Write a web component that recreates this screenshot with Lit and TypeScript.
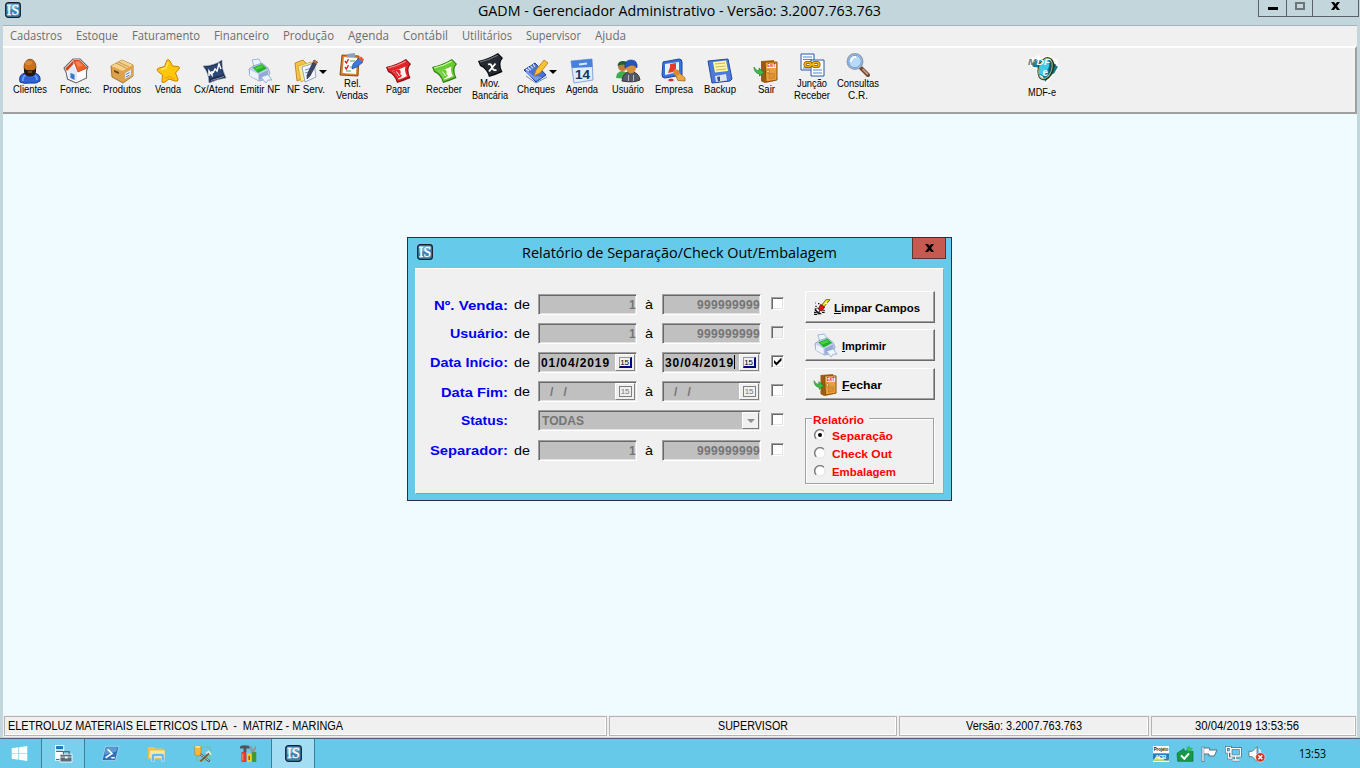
import { LitElement, html, css, svg, nothing } from "lit";
import { customElement, property } from "lit/decorators.js";

// Glyph art, each drawn in a 24 x 24 box.
const door = svg`
  <path d="M7 2 20 1V22L11 24 7 22Z" fill="#b46c1c"/><path d="M7 2 11 3V24L7 22Z" fill="#9a5c14"/>
  <path d="M11 3H23V21L12 23Z" fill="#e9a03c" stroke="#7c4508" stroke-width=".9"/>
  <path d="M15 14.500H20.500V19L15 20Z" fill="#dc9230" stroke="#b8742a" stroke-width=".5"/>
  <rect x="13" y="4" width="9" height="5" fill="#fff"/><text x="13.300" y="8.400" font-family="Liberation Sans, sans-serif" font-size="5" font-weight="bold" textLength="8.400" lengthAdjust="spacingAndGlyphs" fill="#e00020">EXIT</text>
  <circle cx="14" cy="12.500" r="1.500" fill="#fbe08c" stroke="#875f26" stroke-width=".7"/>
  <path d="M0 8Q2 12 5 12V9L10 13.500 5.500 17V15Q0 14 0 8Z" fill="#3cbf44" stroke="#14741f" stroke-width=".6"/>`;
const printer = svg`
  <path d="M4 1 11 0 15 8 7 10Z" fill="#eaf6ff" stroke="#88a9cf" stroke-width=".8"/>
  <path d="M1 10 5 7 14 4 20 9 22 14 19 20 11 22 2 17Z" fill="#c3d1ee" stroke="#7d91ba" stroke-width=".7"/>
  <path d="M2 11 10 15V21L2 17Z" fill="#edf2fc"/><path d="M11 15 20 11V18L11 21Z" fill="#98a8d6"/>
  <path d="M4.500 8.500 14 5 19 9.500 10 14Z" fill="#1fb42c"/><path d="M6.500 8.800 14 6.300 15.500 8 8.500 11Z" fill="#4fd040"/>
  <path d="M13 18 20 15.500 24 21 20 21 18 24Z" fill="#edf6ff" stroke="#85a5ca" stroke-width=".8"/>`;
const bill = (a: string, b: string, c: string) => svg`
  <path d="M0 8Q10 6 20 0L25 5Q20 10 24.500 19Q18 22 11 24Q9 16 2 13Z" fill="${c}"/>
  <path d="M1.300 8.800Q11 6.500 19.800 1.300L23.500 5Q19 10 23 18Q17 20.500 11.500 22.500Q9.500 15 3 12Z" fill="${a}"/>
  <path d="M2 9Q11 7 19.800 2.200" stroke="${b}" stroke-width="1.100" fill="none"/>`;
const billMark = (a: string) => svg`<path d="M6 12Q13 11 19.500 7.500Q18 12 21 17Q17 19 12.500 20.500Q11 15 6 12Z" fill="#fff5ee"/>
  <path d="M6 12Q10 11 13 10.300Q16 13 14 15L16 16.500Q15 18.500 12.300 19.600Q11 15 6 12Z" fill="${a}"/>
  <path d="M10 12.500Q12 13.500 13.500 17" stroke="#fff5ee" stroke-width="1" fill="none"/>`;
const isMark = svg`
  <rect x="1" y="1" width="22" height="22" rx="4" fill="#3f84b4" stroke="#14212c" stroke-width="1.800"/>
  <path d="M3 3H21V8Q12 9 3 13Z" fill="#74add2"/>
  <text x="2.800" y="19" font-family="Liberation Serif, serif" font-size="21" textLength="18.400" lengthAdjust="spacingAndGlyphs" fill="#fff" stroke="#fff" stroke-width=".4">IS</text>`;

const icons: Record<string, unknown> = {
  is: isMark,
  door,
  printer,
  client: svg`<path d="M2 23Q0 15 8 14H16Q23 15 22 22Q19 25 12 24 5 25 2 23Z" fill="#2c63d6" stroke="#133a93"/>
    <path d="M5 22Q4 18 8 16M19 21Q19 18 17 16.500" stroke="#6a9df2" stroke-width="1.800" fill="none"/>
    <ellipse cx="12" cy="8" rx="6" ry="7.800" fill="#c9711d" stroke="#6f3708" stroke-width=".7"/>
    <path d="M6 9Q8 12 12 11 16 12 18 9 19 17.500 12 17.500 5 17.500 6 9Z" fill="#24180f"/><path d="M10 13H14" stroke="#c26a1b"/>
    <ellipse cx="10.500" cy="4" rx="3.500" ry="2.300" fill="#d98636"/>`,
  house: svg`<path d="M2 13 0 9 9 0H16L24 8 22.500 12V19L12 24 3.500 20Z" fill="#fff" stroke="#666" stroke-width="1.100"/>
    <path d="M4 11 9 5.500 13.500 13V22.500L4.500 18.500Z" fill="#dfe9fa"/><path d="M13.500 13 21 10.500V18L13.500 22.500Z" fill="#fff"/>
    <path d="M9.500 1.500 15.500 1.500 23 9 14 13Z" fill="#f26222" stroke="#b63107" stroke-width=".7"/><path d="M9.500 1.500 1.300 9.500 3 12 9.500 5Z" fill="#d64010"/>
    <path d="M11.500 3 15 2.500 19 6.500 13.500 8Z" fill="#fa8450"/><path d="M6.500 14 10.500 15.500V21L6.500 19Z" fill="#3b74c6"/>`,
  box: svg`<path d="M1 7 12 1 23 6V17L13 24 2 18Z" fill="#dda24c" stroke="#916020" stroke-width=".8"/>
    <path d="M1 7 12 1 23 6 13 12Z" fill="#f6d28c"/><path d="M13 12 23 6V17L13 23Z" fill="#e1a34a"/><path d="M6 4 17 9.500M8.500 3 19 8" stroke="#c5954d" stroke-width="1"/>
    <path d="M4 11 9 13V15L4 13Z" fill="#6d461c"/><path d="M15 14 21 10.500V16.500L15 20Z" fill="#e8f1ff" stroke="#aaa" stroke-width=".4"/><path d="M16 15.500 19.500 13.500M16 18 19.500 16" stroke="#4d7ed0"/>`,
  star: svg`<path d="M11 1Q13 0 14 2L16.500 7 22 7.500Q24.500 8 23 10L19.500 14 22 20Q22.500 23 19 22L13 20 8 23.500Q5 24 6 21L6.500 16 1.500 12Q0 10 3 9L8.500 7.500Z" fill="#ffc70a" stroke="#ce7e09"/>
    <path d="M12 3.500 10 9 5 10.500" stroke="#ffe85c" stroke-width="1.600" fill="none"/><path d="M8.500 19.500 13 17.500 18.500 20" stroke="#f8ab10" stroke-width="1.600" fill="none"/>`,
  cash: svg`<path d="M1 7Q12 7 20 1Q19 9 24 19Q15 20 7 24Q7 14 1 7Z" fill="#1b2a47" stroke="#8a97ad" stroke-width=".6"/><path d="M3 8Q12 8 19 3Q18 9 21.500 16Q14 17 8 20Q7 13 3 8Z" fill="#2b4677"/><path d="M7 17V12L10 16V12M11 14 13 10 15 12 17 5 19 10" stroke="#fff" stroke-width="1.500" fill="none"/><path d="M9 21.500 22 17.500" stroke="#7c91b5"/>`,
  notes: svg`<path d="M1 4 9 1 12 4 13 18 3 22Z" fill="#f5c53d" stroke="#ae7a19" stroke-width=".8"/><path d="M4 7 17 3 20 16 7 23Z" fill="#ffe898" stroke="#d09a27" stroke-width=".7"/>
    <path d="M8 8 20 4 22 18 11 23Z" fill="#f3f8ff" stroke="#7894bb" stroke-width=".8"/><path d="M11 11 18 9M11 14 18 12M12 17 17 15.500" stroke="#6b94d9"/>
    <path d="M20 1 23.500 3 16 17 13 20 13.500 15Z" fill="#3d4662" stroke="#151b2e" stroke-width=".6"/><path d="M20 1 23.500 3 22.500 5 19 3Z" fill="#bd6e3d"/>`,
  report: svg`<path d="M2 2 19 3 18 23 0 22Z" fill="#d8842c" stroke="#8c4c12"/><path d="M4 4 17 5 16 21 2.500 20Z" fill="#fff"/>
    <path d="M7 1 15 0V4L7 4.500Z" fill="#8fa0b8"/><path d="M5 8 6.500 10 8.500 6M5 14 6.500 16 8.500 12" stroke="#d81e28" stroke-width="1.300" fill="none"/><path d="M10 8H15M10 14H14M6 18H11" stroke="#47a447"/>
    <path d="M19 5 23 9 17 14 12 16 13 11Z" fill="#397bdf" stroke="#174891" stroke-width=".7"/><path d="M18.500 5.500 21 3.500 24 6.500 22.500 9Z" fill="#e5573a"/>`,
  pay: svg`${bill("#e2252b", "#ff8a82", "#8d1115")}${billMark("#e2252b")}`,
  receive: svg`${bill("#68cb34", "#c6ff95", "#2f8213")}${billMark("#68cb34")}`,
  bank: svg`${bill("#252a31", "#6d747d", "#080a0e")}<path d="M10 11.500Q13 10 14 14T18.500 17M17.500 10.500 11 18.500" stroke="#fff" stroke-width="1.800" fill="none"/>`,
  cheque: svg`<path d="M0 11 11 4 22 16 12 23Z" fill="#4970d2" stroke="#1c3e96"/><path d="M2 11 10 17 18 18 12 22 2 14Z" fill="#799ae9"/>
    <path d="M2 10 5 12M4 8.500 7 11M6.500 6.500 9 9.500M9 5 11 8" stroke="#e8eefc" stroke-width="1.100"/><path d="M20 1 24 4 16 14 10 17 12 11Z" fill="#ffc22e" stroke="#b77510" stroke-width=".8"/>
    <path d="M2 17 12 24 23 18" stroke="#6e86c6" fill="none"/>`,
  calendar: svg`<path d="M1 2 22 0 23 21 4 24Z" fill="#e0ecfc" stroke="#86a6da"/><path d="M1 2 22 0 22.500 8 2 9Z" fill="#4681df"/><path d="M9 5.500 17 4.500" stroke="#d5e7ff" stroke-width="2"/>
    <text x="5" y="20" font-family="Liberation Sans, sans-serif" font-weight="bold" font-size="13" fill="#17345d" textLength="15" lengthAdjust="spacingAndGlyphs">14</text>`,
  users: svg`<path d="M0 19Q0 13 6 12 12 12 12 20Z" fill="#3fae50"/><circle cx="6.500" cy="7.500" r="4.500" fill="#bc7c38"/><path d="M1.500 7Q2 2 7 2T12 7Q8 4 1.500 7Z" fill="#225f36"/>
    <path d="M6 22Q7 13 14 12.500 23 13 24 21Q18 24 6 22Z" fill="#555b64" stroke="#30343b"/><path d="M12.500 16V22M17.500 16V22" stroke="#b4bbc4"/>
    <ellipse cx="15" cy="9" rx="5" ry="5.300" fill="#d78e3d"/><path d="M9 9Q8 1 15 1T21 9Q18 5 15 6T9 9Z" fill="#2456c0" stroke="#123789" stroke-width=".6"/>`,
  company: svg`<path d="M1 3 17 0Q20 0 20 3V16L3 19Q0 19 0 16Z" fill="#3673dc" stroke="#1c479b"/><path d="M3 5 17 3 17 13 3 16Z" fill="#e6f0ff"/><path d="M8 5 14 4 14 10 11 13 6 14 8 8Z" fill="#e63a28"/>
    <ellipse cx="9" cy="21.500" rx="4" ry="1.600" fill="#d3dbe6"/><ellipse cx="9" cy="21" rx="2.500" ry="1.200" fill="#d72d2d"/>
    <path d="M12 13 17 13.500 23 19 23 22 16 21.500Z" fill="#efa742" stroke="#9a5a16" stroke-width=".7"/><circle cx="14.500" cy="13.500" r="3" fill="#d8892e"/>`,
  floppy: svg`<path d="M0 2 20 0 24 20 22 22 4 24Z" fill="#4c79dc" stroke="#274c9d"/><path d="M5 3 18 1.500 20 12 7 13.500Z" fill="#fff6a2"/><path d="M7 5 17 4M7.500 8 17.500 7M8 11 18 10" stroke="#c6b95b"/>
    <path d="M7 17 18 15 19 21.500 8 23Z" fill="#dbe5f1"/><path d="M9 18 12 17.500V22L10 22.500Z" fill="#31528e"/>`,
  merge: svg`<path d="M1 1H14V17H1Z" fill="#fff" stroke="#2857a4"/><path d="M3 4H12M3 6.500H12M3 15H10" stroke="#4b87d2"/><path d="M11 7H24V23H11Z" fill="#fff" stroke="#2857a4"/><path d="M13 17H22M13 20H22" stroke="#4b87d2"/>
    <g fill="none" stroke="#7b5200" stroke-width="3"><rect x="5" y="9.500" width="6" height="4" rx="2"/><rect x="13" y="9.500" width="6" height="4" rx="2"/></g><g fill="none" stroke="#f2b714" stroke-width="1.600"><rect x="5" y="9.500" width="6" height="4" rx="2"/><rect x="13" y="9.500" width="6" height="4" rx="2"/><path d="M9 11.500H15"/></g>`,
  lens: svg`<path d="M15 15 22 22" stroke="#6a4630" stroke-width="4" stroke-linecap="round"/><path d="M16.500 16 22 21.500" stroke="#c7987c" stroke-width="1.800"/>
    <circle cx="9" cy="8.500" r="7.700" fill="#b9dafa" stroke="#959fb2" stroke-width="1.600"/><circle cx="9" cy="8.500" r="6.200" fill="none" stroke="#5f98e0" stroke-width=".9"/><path d="M5 9Q5 4 10 4" stroke="#fff" stroke-width="1.800" fill="none"/>`,
  mdfe: svg`<g transform="scale(.8)"><path d="M1 4 11 0 14 2 21 0 29 4 32 12 27 19 23 22 18 29 15 23 10 20 9 13 4 11Z" fill="#fff" stroke="#fff" stroke-width="1.500"/><path d="M4 8 12 3 22 3 25 7 31 11 27 18 22 20 18 27 15 21 11 19 10 12 5 11Z" fill="#107a9d"/>
    <path d="M13 4 21 4 22 10 17 21 11 18Z" fill="#45c8e8"/><path d="M23 5 29 9 24 17 21 18Z" fill="#155466"/><ellipse cx="18.500" cy="13" rx="7.500" ry="11.500" transform="rotate(18 18 13)" stroke="#253b1b" stroke-width="1.600" fill="none"/><ellipse cx="18" cy="13" rx="6.500" ry="11" transform="rotate(18 18 13)" stroke="#d5dd8c" stroke-width=".7" fill="none"/>
    <text x="0" y="9" font-family="Liberation Sans, sans-serif" font-weight="bold" font-style="italic" font-size="9" textLength="23" lengthAdjust="spacingAndGlyphs" fill="#eaffff"><tspan fill="#69757c">M</tspan>DF</text><text x="15" y="20.500" font-family="Liberation Sans, sans-serif" font-weight="bold" font-size="10.500" fill="#effcff">e</text></g>`,
  eraser: svg`<path d="M18 1H24L13 14H8Z" fill="#ffe900" stroke="#222" stroke-width="1"/><path d="M10 8 16 12 12 18 6 16Z" fill="#e51313" stroke="#400" stroke-width="1"/><path d="M5 13 9 18 6 20 3 16Z" fill="#fff" stroke="#111"/><path d="M16 6 20 7" stroke="#fff" stroke-width="2"/>
    <path d="M0 20H4M6 22H11M0 23H5M3 17 6 21 9 19M2 11H4M6 7H8M2 6H3M12 20H16M14 17H16M2 14V18" stroke="#111" stroke-width="1.700" fill="none"/>`,
  win: svg`<path d="M1 4.500 10.500 3.300V11.500H1ZM11.500 3.100 23 1.500V11.500H11.500ZM1 12.500H10.500V20.700L1 19.500ZM11.500 12.500H23V22.500L11.500 20.900Z" fill="#fff"/>`,
  server: svg`<path d="M0 0H13V22H0Z" fill="#fff"/><path d="M1.500 1.500H11.500V6H1.500Z" fill="#1379b8"/><path d="M1.500 9H11.500M1.500 20.500H8" stroke="#1379b8" stroke-width="1.500"/><path d="M7 13H24V24H7Z" fill="#596c7a" stroke="#fff" stroke-width="1.200"/><path d="M12 13V9.500H20V13" stroke="#596c7a" stroke-width="1.800" fill="none"/><path d="M7 17H14M18 17H24" stroke="#fff"/><path d="M14 16H18V19H14Z" fill="#fff"/>`,
  shell: svg`<path d="M5 2H24L19 22H0Z" fill="#2d70b7" stroke="#c8e4f8" stroke-width=".9"/><path d="M6 3H22L20 9 3 14Z" fill="#5e9ad3"/><path d="M8 6 14 12 5 18M13 18H18" stroke="#fff" stroke-width="2.400" fill="none"/>`,
  folder: svg`<path d="M0 3H9L11 5H22V20H0Z" fill="#eec65d"/><path d="M2 7H24V19H1Z" fill="#fbe7a0" stroke="#dcae44"/><path d="M5 23V15Q5 12 9 12H19Q23 12 23 15V23H19V16H9V23Z" fill="#67b5e6" stroke="#d9f2ff" stroke-width=".8"/>`,
  tools: svg`<rect x="4" y="3" width="19" height="19" fill="none" stroke="#78b834" stroke-dasharray="1.500 1.500"/><path d="M1 2Q6-1 10 2V14Q6 17 1 14Z" fill="#f3b83e" stroke="#ad7019" stroke-width=".7"/><ellipse cx="5.500" cy="2.500" rx="4" ry="1.500" fill="#ffe6a1"/>
    <path d="M9 13 22 23" stroke="#4a5761" stroke-width="3"/><path d="M9 13 21 22" stroke="#fff" stroke-width="1"/><path d="M21 12 9 23" stroke="#875a28" stroke-width="2.500"/><path d="M17 12 21 9 24 14" stroke="#dfe6ea" stroke-width="2.400" fill="none"/>`,
  kit: svg`<path d="M0 2Q4-1 13 1L14 5H9V10H5V5H0Z" fill="#50555b"/><path d="M15 8Q12 2 17 1V5L19 6 21 1Q25 4 21 8V13H16Z" fill="#8d999f"/><rect x="2" y="10" width="7" height="14" rx="1" fill="#e33a22"/><path d="M4 12V22" stroke="#ff9a80" stroke-width="1.400"/><rect x="10" y="12" width="6" height="12" fill="#f3cd26"/><path d="M12 15H14V21H12Z" fill="#b8361d"/><rect x="17" y="10" width="6" height="14" rx="1" fill="#42963a"/>`,
  projeto: svg`<rect width="24" height="24" fill="#fff"/><text x="1" y="8" font-family="Liberation Sans, sans-serif" font-weight="bold" font-size="8" textLength="22" lengthAdjust="spacingAndGlyphs" fill="#111">Projeto</text><rect y="11" width="24" height="11" fill="#287bc0"/><path d="M0 21Q8 12 16 20T24 16V22H0Z" fill="#d9e052"/><text x="3" y="20" font-family="Liberation Sans, sans-serif" font-weight="bold" font-size="9" textLength="17" fill="#fff">ACB</text>`,
  shield: svg`<path d="M0 11 10 4 13 9 18 1V8H24V23H1Z" fill="#159947" stroke="#087334"/><path d="M14 1 24 3 21 8H16Z" fill="#35c35c"/><path d="M6 14 11 19 18 11" stroke="#fff" stroke-width="3" fill="none"/>`,
  flag: svg`<path d="M3 1V24" stroke="#566b78" stroke-width="4"/><path d="M4 3H13V6H24L20 15H12V12H4Z" fill="#fff" stroke="#526a76" stroke-width="1.400"/><path d="M3 2V23" stroke="#fff" stroke-width="2"/>`,
  network: svg`<g fill="none"><path d="M9 4H23V15H9ZM16 15V20M11 21H22M2 2H8V9H2ZM5 9V18H11" stroke="#4a6878" stroke-width="4"/><path d="M9 4H23V15H9ZM16 15V20M11 21H22M2 2H8V9H2ZM5 9V18H11" stroke="#fff" stroke-width="2"/></g>`,
  sound: svg`<path d="M0 8H5L12 1V23L5 16H0Z" fill="#fff" stroke="#526a76" stroke-width="1.200"/><path d="M15 5Q18 8 16 12" stroke="#fff" stroke-width="2" fill="none"/><circle cx="17" cy="17" r="7" fill="#d52e20" stroke="#fff" stroke-width=".8"/><path d="M14 14 20 20M20 14 14 20" stroke="#fff" stroke-width="2.200"/>`,
};

@customElement("ui-icon")
class UiIcon extends LitElement {
  @property() name = "";
  @property({ type: Number }) size = 24;
  static styles = css`:host{display:block;flex:none;line-height:0} svg{display:block;overflow:visible}`;
  render() {
    return html`<svg width=${this.size} height=${this.size} viewBox="0 0 24 24">${icons[this.name]}</svg>`;
  }
}

// A single-line caption fitted to a given width, either by stretching its
// letters or, when spaced, by adjusting the tracking.
@customElement("ui-text")
class UiText extends LitElement {
  @property({ type: Number }) width = 0;
  @property() text = "";
  @property({ type: Boolean }) hotkey = false;
  @property({ type: Boolean }) spaced = false;
  static styles = css`:host{display:inline-block;white-space:pre;text-align:left} .run{display:inline-block;white-space:pre;transform-origin:0 50%}`;
  firstUpdated() {
    const run = this.renderRoot.querySelector<HTMLElement>(".run")!;
    const natural = run.getBoundingClientRect().width;
    if (!this.width || !natural) return;
    if (this.spaced) {
      run.style.letterSpacing = `${(this.width - natural) / this.text.length}px`;
    } else {
      run.style.transform = `scaleX(${this.width / natural})`;
    }
    this.style.width = `${this.width}px`;
  }
  render() {
    return html`<span class="run">${this.hotkey ? html`<u>${this.text[0]}</u>${this.text.slice(1)}` : this.text}</span>`;
  }
}

const t = (text: string, width: number, hotkey = false, spaced = false) =>
  html`<ui-text text=${text} width=${width} ?hotkey=${hotkey} ?spaced=${spaced}></ui-text>`;

type Tool = { icon: string; lines: [string, number][]; arrow?: boolean };
const tools: Tool[] = [
  { icon: "client", lines: [["Clientes", 34]] },
  { icon: "house", lines: [["Fornec.", 32]] },
  { icon: "box", lines: [["Produtos", 38]] },
  { icon: "star", lines: [["Venda", 26]] },
  { icon: "cash", lines: [["Cx/Atend", 40]] },
  { icon: "printer", lines: [["Emitir NF", 40]] },
  { icon: "notes", lines: [["NF Serv.", 38]], arrow: true },
  { icon: "report", lines: [["Rel.", 17], ["Vendas", 32]] },
  { icon: "pay", lines: [["Pagar", 24]] },
  { icon: "receive", lines: [["Receber", 36]] },
  { icon: "bank", lines: [["Mov.", 20], ["Bancária", 36]] },
  { icon: "cheque", lines: [["Cheques", 38]], arrow: true },
  { icon: "calendar", lines: [["Agenda", 32]] },
  { icon: "users", lines: [["Usuário", 32]] },
  { icon: "company", lines: [["Empresa", 38]] },
  { icon: "floppy", lines: [["Backup", 32]] },
  { icon: "door", lines: [["Sair", 17]] },
  { icon: "merge", lines: [["Junção", 30], ["Receber", 36]] },
  { icon: "lens", lines: [["Consultas", 42], ["C.R.", 20]] },
];

const menus: [string, number][] = [
  ["Cadastros", 52], ["Estoque", 42], ["Faturamento", 68], ["Financeiro", 55], ["Produção", 51],
  ["Agenda", 41], ["Contábil", 45], ["Utilitários", 50], ["Supervisor", 55], ["Ajuda", 31],
];

type Row = { label: string; w: number; kind: "num" | "date" | "combo"; low?: boolean; on?: boolean; grey?: boolean; from?: string; to?: string };
const rows: Row[] = [
  { label: "Nº. Venda:", w: 74, kind: "num", low: true },
  { label: "Usuário:", w: 58, kind: "num", grey: true },
  { label: "Data Início:", w: 78, kind: "date", on: true, from: "01/04/2019", to: "30/04/2019" },
  { label: "Data Fim:", w: 67, kind: "date", low: true, from: "  /  /", to: "  /  /" },
  { label: "Status:", w: 47, kind: "combo" },
  { label: "Separador:", w: 78, kind: "num" },
];

@customElement("app-root")
class AppRoot extends LitElement {
  static styles = css`
    :host{display:block;width:1360px;height:768px;overflow:hidden;font-family:"Liberation Sans",Arial,sans-serif;color:#000}
    *{box-sizing:border-box}
    .screen{position:relative;display:flex;flex-direction:column;height:768px;background:#c3d6dc}
    .title{height:25px;display:grid;grid-template-columns:1fr 403px 1fr;align-items:start;font:14.8px/21px "Open Sans","Noto Sans",sans-serif;margin-left:-1px}
    .title .logo{padding:2px 0 0 6px}
    .winbtns{display:flex;justify-self:end;margin-right:1px;height:17px;border:1px solid #5b6166;border-top:0}
    .wb{display:flex;align-items:center;justify-content:center;border-right:1px solid #5b6166}
    .wb:nth-child(1){width:28px}.wb:nth-child(2){width:26px;padding-bottom:4px}.wb:nth-child(3){width:45px;border:0;padding-bottom:4px}
    .wb svg{display:block}
    .body{margin:0 3px;flex:1;display:flex;flex-direction:column;border-top:1px solid #a6b3bd;background:#f0fbff;min-height:0}
    .menu{height:20px;flex:none;background:#f0f0f0;display:flex;gap:14px;padding:0 7px;color:#6d6d6d;font:12px/20px "Open Sans","Noto Sans",sans-serif}
    .tools{height:68px;flex:none;display:flex;background:#f0f0f0;border-top:2px solid #fff;border-bottom:2px solid #a0a0a0;border-right:2px solid #a0a0a0;padding-left:4px}
    .tool{width:46px;flex:none;display:flex;flex-direction:column;align-items:center;padding-top:11px;font-size:10px;line-height:12px}
    .tool.two{padding-top:5px}
    .tool ui-icon{margin-bottom:1px}
    .pic{display:flex;align-items:center;height:25px}
    .arrow{border:4px solid transparent;border-top-color:#000;border-bottom:0;margin:1px -9px 0 1px}
    .mdfe{margin-left:131px;width:60px;display:flex;flex-direction:column;align-items:center;padding-top:8px;font-size:10px;line-height:12px}
    .mdfe ui-icon{margin-bottom:2px}
    .desk{flex:1}
    .status{height:22px;flex:none;background:#f0f0f0;display:grid;grid-template-columns:603px 288px 250px 205px;gap:2px;padding:1px 0 2px 1px;font-size:12px;line-height:18px;text-align:center}
    .panel{border:1px solid #b4b4b4;box-shadow:inset -1px -1px #fff}
    .panel:first-child{text-align:left;padding-left:3px}
    .panel:last-child{padding-right:13px}
    .task{height:30px;margin-top:1px;background:#66c9ea;border-top:1px solid #4c656f;display:flex;align-items:stretch}
    .tb{width:46px;display:flex;align-items:center;justify-content:center}
    .tb:first-child{width:41px;padding-right:2px}
    .tb.run{width:44px;background:#78d0ec;border:solid #3e7f96;border-width:0 1px;margin-right:2px}
    .tb.cur{background:#a2ddf3}
    .tray{margin-left:auto;display:flex;align-items:center;gap:8px;padding-right:34px;font:12px "Open Sans","Noto Sans",sans-serif}
    .tray ui-text{margin-left:26px}
    .dialog{position:absolute;left:407px;top:237px;width:545px;height:264px;border:1px solid #24343c;background:#66caea;padding:0 7px 6px;display:flex;flex-direction:column}
    .dtitle{height:30px;flex:none;display:grid;grid-template-columns:1fr 315px 1fr;font:14.8px/29px "Open Sans","Noto Sans",sans-serif}
    .dtitle ui-icon{padding:6px 0 0 2px}
    .close{justify-self:end;width:34px;height:21px;margin-right:-2px;background:#c65950;border:1px solid #573733;border-top:0;display:flex;align-items:center;justify-content:center}
    .client{flex:1;display:flex;background:#f0f0f0;border-top:1px solid #fff;border-left:1px solid #fff;border-right:1px solid #9aa8ac;border-bottom:1px solid #9a9a9a}
    .form{width:389px;padding:25px 0 0 0}
    .row{height:29px;display:grid;grid-template-columns:92px 30px 99px 25px 99px 9px 14px;line-height:22px}
    .row:last-child{margin-top:1px}
    .lbl{text-align:right;color:#0000f0;font-weight:bold;font-size:13.5px}
    .lbl.low{padding-top:1px}
    .de{padding-left:6px;font-size:13.5px}
    .a{padding-left:8px;font-size:13px}
    .field{height:21px;background:#c0c0c0;border:1px solid;border-color:#a0a0a0 #fff #fff #a0a0a0;box-shadow:inset 1px 1px #696969,inset -1px -1px #e3e3e3;display:flex;justify-content:space-between;align-items:stretch;color:#757575;font-weight:bold;font-size:12px;line-height:20px;padding:1px 1px 1px 2px}
    .field ui-text{line-height:18px}
    .field.num{justify-content:flex-end;padding-right:0}
    .field.on{color:#000}
    .field.combo{grid-column:3 / 6;padding-left:3px}
    .calbtn{width:20px;background:#f0f0f0;border:1px solid #fff;border-right-color:#808080;border-bottom-color:#808080;display:flex;align-items:center;justify-content:center}
    .cal{width:13px;height:11px;border:1px solid #808080;font:8px/9px "Liberation Sans",sans-serif;text-align:center;color:#777;letter-spacing:-.2px}
    .on .cal{border-color:#999 #000080 #000080 #999;border-width:1px 2px 2px 1px;color:#000}
    .caret{width:1px;height:14px;background:#000;margin:1px auto 0 0}
    .drop{width:17px;background:#f0f0f0;border:1px solid #fff;border-right-color:#777;border-bottom-color:#777;display:flex;align-items:center;justify-content:center}
    .drop i{border:4px solid transparent;border-top-color:#909090;border-bottom:0}
    .check{width:13px;height:13px;margin:3px 0 0 1px;background:#fff;border:solid;border-width:1px;border-color:#a0a0a0 #fff #fff #a0a0a0;box-shadow:inset 1px 1px #696969,inset -1px -1px #e3e3e3}
    .check.grey{background:#f0f0f0}
    .check svg{display:block}
    .side{width:130px;padding-top:22px;display:flex;flex-direction:column}
    .btn{width:130px;height:32px;flex:none;margin-bottom:6px;background:#f0f0f0;border:1px solid;border-color:#fff #696969 #696969 #fff;box-shadow:inset -1px -1px #a0a0a0;display:flex;align-items:center;font-weight:bold;font-size:11.5px;line-height:18px;padding:2px 0 0 8px;gap:4px}
    .btn ui-icon{margin-top:-2px}
    .btn:nth-child(n+2){gap:5px}
    .btn:nth-child(3){margin-top:1px}
    .group{width:129px;height:66px;margin-top:12px;border:1px solid #a0a0a0;box-shadow:1px 1px #fff,inset 1px 1px #fff;color:#f00;font-weight:bold;font-size:11.5px;padding-left:7px}
    .cap{display:block;width:57px;height:13px;margin-top:-6px;line-height:14px;background:#f0f0f0;margin-left:-1px;padding-left:1px}
    .opt{height:18px;display:flex;gap:7px;line-height:20px}
    .opt svg{margin:3px 0 0 1px;flex:none}
    .opt ui-text{margin-left:-1px}
  `;

  private field(r: Row, text: string, active: boolean) {
    if (r.kind === "num") return html`<div class="field num">${t(text, text.length * 7, false, true)}</div>`;
    return html`<div class="field ${r.on ? "on" : ""}">${t(text, r.on ? 69 : 27, false, true)}${active ? html`<i class="caret"></i>` : nothing}<span class="calbtn"><span class="cal">15</span></span></div>`;
  }

  private row(r: Row) {
    return html`<div class="row">
      <span class="lbl ${r.low ? "low" : ""}">${t(r.label, r.w)}</span>
      <span class="de">${r.kind === "combo" ? nothing : t("de", 16)}</span>
      ${r.kind === "combo"
        ? html`<div class="field combo">${t("TODAS", 42)}<span class="drop"><i></i></span></div>`
        : html`${this.field(r, r.from ?? "1", false)}<span class="a">${t("à", 8)}</span>${this.field(r, r.to ?? "999999999", !!r.on)}`}
      <span></span>
      <span class="check ${r.grey ? "grey" : ""}">${r.on ? html`<svg width="11" height="11"><path d="M2 4V7L4.500 9.500 9.500 4.500V1.500L4.500 6.500Z" fill="#000"/></svg>` : nothing}</span>
    </div>`;
  }

  private option(text: string, width: number, on: boolean) {
    return html`<div class="opt"><svg width="12" height="12"><circle cx="6" cy="6" r="5" fill="#fff" stroke="#e3e3e3"/><path d="M2.200 9.800A5.300 5.300 0 0 1 9.800 2.200" fill="none" stroke="#7c7c7c" stroke-width="1.400"/>${on ? svg`<circle cx="6" cy="6" r="2" fill="#000"/>` : nothing}</svg>${t(text, width)}</div>`;
  }

  render() {
    const cross = html`<svg width="9" height="8" viewBox="0 0 9 8"><path d="M0 0H3L4.500 2 6 0H9L6 4 9 8H6L4.500 6 3 8H0L3 4Z"/></svg>`;
    return html`<div class="screen">
      <header class="title">
        <ui-icon class="logo" name="is" size="16"></ui-icon>
        ${t("GADM - Gerenciador Administrativo - Versão: 3.2007.763.763", 403)}
        <div class="winbtns">
          <span class="wb"><svg width="10" height="3"><rect width="10" height="3"/></svg></span>
          <span class="wb"><svg width="10" height="8"><rect x="1" y="1" width="8" height="6" fill="none" stroke="#6b7478" stroke-width="2"/></svg></span>
          <span class="wb">${cross}</span>
        </div>
      </header>
      <main class="body">
        <nav class="menu">${menus.map(([m, w]) => t(m, w))}</nav>
        <div class="tools">
          ${tools.map((k) => html`<div class="tool ${k.lines.length > 1 ? "two" : ""}">
            <div class="pic"><ui-icon name=${k.icon}></ui-icon>${k.arrow ? html`<i class="arrow"></i>` : nothing}</div>
            ${k.lines.map(([s, w]) => t(s, w))}
          </div>`)}
          <div class="mdfe"><ui-icon name="mdfe" size="29"></ui-icon>${t("MDF-e", 28)}</div>
        </div>
        <div class="desk"></div>
        <footer class="status">
          <div class="panel">${t("ELETROLUZ MATERIAIS ELETRICOS LTDA  -  MATRIZ - MARINGA", 335)}</div>
          <div class="panel">${t("SUPERVISOR", 70)}</div>
          <div class="panel">${t("Versão: 3.2007.763.763", 116)}</div>
          <div class="panel">${t("30/04/2019 13:53:56", 104)}</div>
        </footer>
      </main>
      <div class="task">
        <span class="tb"><ui-icon name="win" size="17"></ui-icon></span>
        <span class="tb run"><ui-icon name="server" size="17"></ui-icon></span>
        ${["shell", "folder", "tools", "kit"].map((n) => html`<span class="tb"><ui-icon name=${n} size="17"></ui-icon></span>`)}
        <span class="tb run cur"><ui-icon name="is" size="17"></ui-icon></span>
        <div class="tray">
          ${["projeto", "shield", "flag", "network", "sound"].map((n) => html`<ui-icon name=${n} size="16"></ui-icon>`)}
          ${t("13:53", 27)}
        </div>
      </div>
      <section class="dialog">
        <div class="dtitle"><ui-icon name="is" size="16"></ui-icon>${t("Relatório de Separação/Check Out/Embalagem", 315)}<span class="close">${cross}</span></div>
        <div class="client">
          <div class="form">${rows.map((r) => this.row(r))}</div>
          <div class="side">
            <div class="btn"><ui-icon name="eraser" size="16"></ui-icon>${t("Limpar Campos", 86, true)}</div>
            <div class="btn"><ui-icon name="printer" size="23"></ui-icon>${t("Imprimir", 44, true)}</div>
            <div class="btn"><ui-icon name="door" size="23"></ui-icon>${t("Fechar", 40, true)}</div>
            <div class="group"><span class="cap">${t("Relatório", 51)}</span>
              ${this.option("Separação", 61, true)}${this.option("Check Out", 60, false)}${this.option("Embalagem", 64, false)}
            </div>
          </div>
        </div>
      </section>
    </div>`;
  }
}
